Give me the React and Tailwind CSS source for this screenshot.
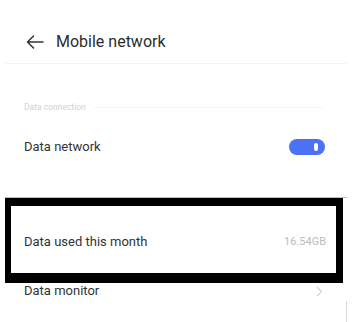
import React from "react";

export default function App() {
  return (
    <div className="relative w-[352px] h-[322px] overflow-hidden bg-white font-['Roboto',sans-serif] text-[#2a2a2a]">
      <div className="h-[63px] pt-[21px] flex items-center pl-[26px]">
        <svg width="18" height="14" viewBox="0 0 18 14" className="shrink-0">
          <path d="M17 7H1.5M7.5 1L1.5 7l6 6" fill="none" stroke="#333" strokeWidth="1.5" strokeLinecap="round" strokeLinejoin="round" />
        </svg>
        <span className="ml-[12px] text-[16px] leading-none text-[#2c2c2c]">Mobile network</span>
      </div>
      <div className="mx-[5px] h-px bg-[#f4f4f4]" />

      <div className="mt-[37px] flex items-center pl-[24px] pr-[27px] h-[12px]">
        <span className="text-[8.5px] leading-none text-[#d2d2d2]">Data connection</span>
        <div className="ml-[7px] flex-1 h-px bg-[#f6f6f6]" />
      </div>

      <div className="mt-[19px] h-[30px] flex items-center justify-between pl-[24px] pr-[27px]">
        <span className="text-[13px] text-[#333]">Data network</span>
        <div className="w-[36px] h-[16px] rounded-full bg-[#4c70f6] flex items-center justify-end pr-[7px]">
          <div className="w-[4px] h-[8px] rounded-full bg-white" />
        </div>
      </div>

      <div className="mt-[35px] mx-[5px] h-px bg-[#bdbdbd]" />
      <div className="mx-[5px] w-[338px] h-[85px] border-t-[8px] border-l-[6px] border-r-[7px] border-b-[10px] border-black bg-white flex items-center justify-between pl-[13px] pr-[10px] pt-[5px]">
        <span className="text-[13px] text-[#333]">Data used this month</span>
        <span className="text-[11px] text-[#bdbdbd]">16.54GB</span>
      </div>

      <div className="h-[16px] flex items-center justify-between pl-[24px] pr-[29px]">
        <span className="text-[13px] text-[#333]">Data monitor</span>
        <svg width="7" height="11" viewBox="0 0 7 11">
          <path d="M1 1l4.5 4.5L1 10" fill="none" stroke="#d4d4d4" strokeWidth="1.2" />
        </svg>
      </div>

      <div className="absolute left-[346px] top-[301px] w-[3px] h-[21px] border-l border-[#d8d8d8]" />
    </div>
  );
}
